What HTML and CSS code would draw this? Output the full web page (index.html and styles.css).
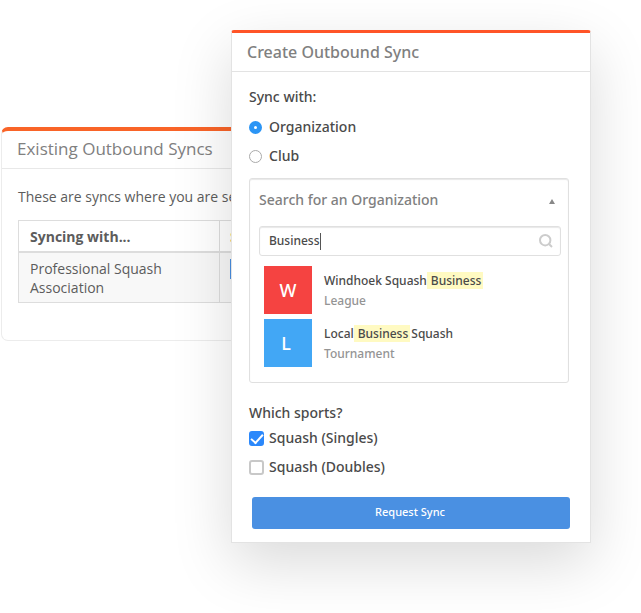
FILE: index.html
```html
<!DOCTYPE html>
<html lang="en">
<head>
<meta charset="utf-8">
<title>Outbound Syncs</title>
<link rel="stylesheet" href="styles.css">
</head>
<body>
<main class="stage">
  <section class="card existing">
    <h2 class="card-title">Existing Outbound Syncs</h2>
    <div class="existing-body">
      <p class="intro">These are syncs where you are se</p>
      <table class="syncs">
        <thead><tr><th>Syncing with...</th><th class="status">S</th></tr></thead>
        <tbody><tr><td>Professional Squash Association</td><td><span class="badge"></span></td></tr></tbody>
      </table>
    </div>
  </section>

  <form class="card create">
    <h2 class="card-title">Create Outbound Sync</h2>
    <div class="create-body">
      <fieldset class="group">
        <legend>Sync with:</legend>
        <label class="choice"><input type="radio" name="target" checked>Organization</label>
        <label class="choice"><input type="radio" name="target">Club</label>
      </fieldset>

      <div class="picker">
        <button type="button" class="picker-toggle" aria-expanded="true">Search for an Organization<svg class="arrow" viewBox="0 0 6 5" aria-hidden="true"><path d="M3 0L6 5H0z"/></svg></button>
        <label class="search">
          <input type="text" value="Business">
          <span class="caret"></span>
          <svg class="glass" viewBox="0 0 14 14" aria-hidden="true"><circle cx="6.2" cy="6.2" r="5.2"/><path d="M10 10l3 3"/></svg>
        </label>
        <ul class="results">
          <li class="result"><span class="avatar red">W</span><div><p class="name">Windhoek Squash<mark>Business</mark></p><p class="kind">League</p></div></li>
          <li class="result"><span class="avatar blue">L</span><div><p class="name">Local<mark>Business</mark>Squash</p><p class="kind">Tournament</p></div></li>
        </ul>
      </div>

      <fieldset class="group sports">
        <legend>Which sports?</legend>
        <label class="choice"><input type="checkbox" checked>Squash (Singles)</label>
        <label class="choice"><input type="checkbox">Squash (Doubles)</label>
      </fieldset>
      <button type="submit" class="submit">Request Sync</button>
    </div>
  </form>
</main>
</body>
</html>
```
FILE: styles.css
```css
* { box-sizing: border-box; }

body {
  margin: 0;
  background: #fff;
  color: #4a4a4a;
  font: 500 14px/20px "Noto Sans", sans-serif;
}

h2, p, ul, fieldset { margin: 0; padding: 0; }

/* Both cards share one grid row; the form overlaps the list. */
.stage {
  display: grid;
  grid-template-columns: 230px 1fr;
  align-items: start;
  min-height: 100vh;
  overflow: hidden;
}

.card {
  grid-row: 1;
  background: #fff;
  border: 1px solid #e3e3e3;
}

.card-title { color: #808080; border-bottom: 1px solid #e3e3e3; }

.existing {
  grid-column: 1 / 3;
  margin: 127px 120px 0 1px;
  padding-bottom: 37px;
  border: 1px solid #ececec;
  border-top: 4px solid #f96428;
  border-radius: 7px;
  color: #5c5c5c;
  font-family: "Open Sans", sans-serif;
  font-weight: 400;
}

.existing .card-title {
  padding: 5px 15px 7px;
  color: #808080;
  border-color: #e8e8e8;
  font-size: 17px;
  font-weight: 400;
  line-height: 25px;
}

.existing-body { padding: 18px 16px 0; }
.intro { white-space: nowrap; }

.syncs {
  width: 100%;
  margin-top: 13px;
  border-collapse: collapse;
  table-layout: fixed;
  line-height: 19px;
}

.syncs th, .syncs td {
  padding: 6px 11px 5px;
  border: 1px solid #ddd;
  text-align: left;
  vertical-align: top;
}

.syncs th { font-weight: 700; border-bottom-width: 2px; }
.syncs th:first-child { width: 201px; }
.syncs td { background: #f8f8f8; }
.syncs .status { padding-left: 10px; color: #f0ad4e; }
.syncs td:last-child { padding-left: 10px; }

.badge {
  display: block;
  width: 60px;
  height: 20px;
  background: #4a90e2;
}

.create {
  grid-column: 2;
  margin: 30px 50px 0 1px;
  border-top: 3px solid #ff5427;
  border-radius: 3px 3px 0 0;
  box-shadow: 0 20px 60px rgba(0, 0, 0, .15);
}

.create .card-title {
  padding: 7px 15px;
  font-size: 16px;
  font-weight: 500;
  line-height: 24px;
}

.create-body { padding: 15px 21px 13px 17px; }

.group { border: 0; min-width: 0; }
.group legend { padding: 0; }

.choice {
  display: flex;
  align-items: center;
  gap: 7px;
  margin-top: 9px;
}

.group legend + .choice { margin-top: 10px; }

.choice input {
  appearance: none;
  flex: none;
  width: 13px;
  height: 13px;
  margin: 0;
  border: 1px solid #aaa;
  border-radius: 50%;
  background: #fff;
}

.choice input[type="radio"]:checked {
  border: 5px solid #2b95f5;
}

.choice input[type="checkbox"] {
  width: 15px;
  height: 15px;
  border: 2px solid #c8c8c8;
  border-radius: 3px;
}

.choice input[type="checkbox"]:checked {
  display: grid;
  place-items: center;
  border-color: #2b88fb;
  background: #2b88fb;
}

.choice input[type="checkbox"]:checked::before {
  content: "";
  width: 10px;
  height: 5px;
  border: solid #fff;
  border-width: 0 0 2px 2px;
  transform: translateY(-1px) rotate(-48deg);
}

.sports .choice { gap: 5px; }
.group.sports legend + .choice { margin-top: 5px; }

.picker {
  margin-top: 12px;
  padding: 11px 7px 15px 9px;
  border: 1px solid #e0e0e0;
  border-radius: 3px;
  box-shadow: inset 0 1px 1px #e8e8e8;
}

.picker-toggle {
  display: flex;
  align-items: center;
  justify-content: space-between;
  width: 100%;
  padding: 0 6px 0 0;
  border: 0;
  background: none;
  color: #808080;
  font: inherit;
}

.arrow { width: 6px; height: 5px; margin-top: 3px; fill: #888; }

.search {
  display: flex;
  align-items: center;
  height: 30px;
  margin-top: 16px;
  padding: 0 7px 0 9px;
  border: 1px solid #e0e0e0;
  border-radius: 3px;
  box-shadow: inset 0 1px 1px #e8e8e8;
}

.search input {
  field-sizing: content;
  padding: 0;
  border: 0;
  outline: 0;
  background: none;
  color: #4a4a4a;
  font: 500 12px/18px "Noto Sans", sans-serif;
}

.caret { width: 1px; height: 17px; background: #555; }
.glass { width: 14px; height: 14px; margin-left: auto; fill: none; stroke: #ccc; stroke-width: 2; }

.results {
  display: grid;
  gap: 5px;
  margin-top: 10px;
  padding-left: 5px;
  list-style: none;
  font-size: 12px;
}

.result { display: flex; gap: 12px; }
.result > div { padding-top: 5px; }
.kind { color: #949494; }

.name mark {
  margin-right: 1px;
  padding: 0 2px 0 4px;
  background: #fffac2;
  color: inherit;
}

.avatar {
  display: grid;
  place-items: center;
  width: 48px;
  height: 48px;
  color: #fff;
  font-size: 18px;
}

.red { background: #f54341; }
.blue { padding-right: 4px; background: #42a7f5; }
.sports { margin-top: 20px; }

.submit {
  display: block;
  width: calc(100% - 2px);
  height: 32px;
  margin: 20px 0 0 3px;
  padding: 0 8px 2px 6px;
  border: 0;
  border-radius: 3px;
  background: #4a90e2;
  color: #fff;
  font: 500 11px/20px "Noto Sans", sans-serif;
}
```
